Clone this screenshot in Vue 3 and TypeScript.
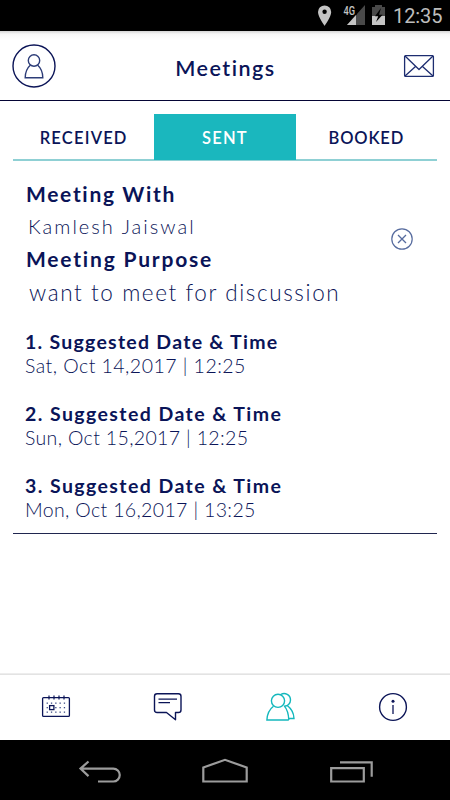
<script setup lang="ts">
import { ref } from 'vue'

interface Slot {
  id: number
  when: string
}

const tabs = ['RECEIVED', 'SENT', 'BOOKED']
const active = ref('SENT')
const slots: Slot[] = [
  { id: 1, when: 'Sat, Oct 14,2017 | 12:25' },
  { id: 2, when: 'Sun, Oct 15,2017 | 12:25' },
  { id: 3, when: 'Mon, Oct 16,2017 | 13:25' },
]
const dots = [0, 1, 2].flatMap((r) =>
  [0, 1, 2, 3, 4].map((c) => ({ x: 6 + c * 4.3, y: 11 + r * 4.5 })),
).filter((d) => !(d.x > 9 && d.x < 12 && d.y > 14 && d.y < 17))
</script>

<template>
  <div class="screen">
    <div class="status">
      <svg width="130" height="31" viewBox="0 0 130 31">
        <path d="M4.600 5.400a6.600 6.600 0 0 0-6.600 6.600c0 4.800 6.600 13.800 6.600 13.800s6.600-9 6.600-13.800a6.600 6.600 0 0 0-6.600-6.600z" fill="#c4c4c4" />
        <circle cx="4.600" cy="11.800" r="2.200" fill="#000" />
        <path d="M45 5v20H27z" fill="#494949" />
        <path d="M36 15v10h-9z" fill="#c4c4c4" />
        <path d="M22 5h14.500v10H22z" fill="#000" />
        <text class="net" x="23.500" y="14.500" textLength="11.500" lengthAdjust="spacingAndGlyphs">4G</text>
        <path d="M55 5h7v2h3v9H52V7h3z" fill="#494949" />
        <path d="M52 16h13v9H52z" fill="#c4c4c4" />
        <path d="M61 8l-6 8.200h3.200L56 22l6.600-7.200H59z" fill="#000" />
        <text class="clock" x="73" y="23.200" textLength="49.500">12:35</text>
      </svg>
    </div>

    <header class="header">
      <svg class="avatar" width="46" height="46" viewBox="0 0 46 46" fill="none">
        <circle cx="23" cy="23" r="21" stroke="#0b1457" stroke-width="1.400" />
        <g stroke="#2d3d78" stroke-width="1.400">
          <circle cx="23" cy="17.500" r="5.700" />
          <path d="M19.500 22c-3.200 2.800-5.200 7.200-5.300 12.700h17.600C31.700 29.200 29.700 24.800 26.500 22" />
        </g>
      </svg>
      <h1>Meetings</h1>
      <svg class="mail" width="32" height="24" viewBox="0 0 32 24" fill="none" stroke="#1d2d70" stroke-width="1.300" stroke-linejoin="round">
        <rect x="1.600" y="1.600" width="28.800" height="20.800" rx="1" />
        <path d="M2 2l14 13.500L30 2M2 22l10.500-9.500M30 22l-10.500-9.500" />
      </svg>
    </header>

    <nav class="tabs">
      <button v-for="t in tabs" :key="t" :class="[t.toLowerCase(), { on: t === active }]" @click="active = t">{{ t }}</button>
    </nav>

    <main class="body">
      <section class="meeting">
        <div class="top">
          <div class="info">
            <h2 class="with">Meeting With</h2>
            <p class="name">Kamlesh Jaiswal</p>
            <h2 class="why">Meeting Purpose</h2>
            <p class="purpose">want to meet for discussion</p>
          </div>
          <svg class="cancel" width="24" height="24" viewBox="0 0 24 24" fill="none" stroke="#566b9e">
            <circle cx="12" cy="12" r="10.200" stroke-width="1.200" />
            <path d="M8 8l8 8M16 8l-8 8" stroke-width="1.300" />
          </svg>
        </div>
        <ol class="slots">
          <li v-for="s in slots" :key="s.id" :class="'s' + s.id">
            <h3>{{ s.id }}. Suggested Date &amp; Time</h3>
            <p>{{ s.when }}</p>
          </li>
        </ol>
      </section>
    </main>

    <nav class="dock">
      <a>
        <svg width="30" height="30" viewBox="0 0 30 30" fill="none" stroke="#0b1457">
          <rect x="1.600" y="5.600" width="26.800" height="18.800" rx="1" stroke-width="1.300" />
          <path d="M8 3.500v4M13 3.500v4M18 3.500v4M23 3.500v4" stroke-width="1.200" />
          <rect v-for="d in dots" :key="d.x + '-' + d.y" :x="d.x - 0.4" :y="d.y - 0.5" width="1.300" height="1.300" fill="#3d4c86" stroke="none" />
          <rect x="8.600" y="13.600" width="4.300" height="4" stroke-width="1.300" fill="#fff" />
        </svg>
      </a>
      <a>
        <svg width="30" height="30" viewBox="0 0 30 30" fill="none" stroke="#0b1457">
          <path d="M4.100 1.800h21.300q2.600 0 2.600 2.600v13.500q0 2.600-2.600 2.600h-2.900v7.200l-9-7.200H4.100q-2.600 0-2.600-2.600V4.400q0-2.600 2.600-2.600z" stroke-width="1.400" stroke-linejoin="round" />
          <path d="M5.500 7.200h18.500M5.500 10.600H17" stroke-width="1.300" />
        </svg>
      </a>
      <a>
        <svg width="30" height="30" viewBox="0 0 30 30" fill="none" stroke="#14b8bd" stroke-width="1.400">
          <path d="M15 2.300c4-2 9.500.3 9.500 5.700 0 3.800-3 6.400-6.300 5.900M21.200 13.500c3.800 2.800 6.600 7.600 6.800 13H22.500M18.200 13.900c2.500 2.800 4.300 7.400 4.600 14.100" />
          <path d="M7.500 14.200C3.700 17 1.200 22 .9 28h21.900" />
          <circle cx="12" cy="8.800" r="6.600" fill="#fff" />
        </svg>
      </a>
      <a>
        <svg width="30" height="30" viewBox="0 0 30 30" fill="none">
          <circle cx="15" cy="15" r="13.400" stroke="#0b1457" stroke-width="1.400" />
          <circle cx="15" cy="9.300" r="1.500" fill="#0b1457" />
          <path d="M15 13v9" stroke="#0b1457" stroke-width="1.300" />
        </svg>
      </a>
    </nav>

    <div class="keys">
      <svg width="450" height="60" viewBox="0 0 450 60" fill="none" stroke="#9c9c9c" stroke-width="2.200">
        <path d="M88.500 21.500L80.500 28.600l8 7.500M80.500 28.600h32.800a6.400 6.400 0 0 1 0 12.900H98" />
        <path d="M203.300 27.500L225 19.800l21.700 7.700v14h-43.400z" />
        <path d="M331.200 28.200h32.600v13.300h-32.600zM340 22.300h31.700v14.500" />
      </svg>
    </div>
  </div>
</template>

<style>
body {
  margin: 0;
  background: #fff;
}
</style>

<style scoped>
* {
  box-sizing: border-box;
}
h1, h2, h3, p, ol {
  margin: 0;
  padding: 0;
  list-style: none;
}
.screen {
  display: flex;
  flex-direction: column;
  width: 450px;
  height: 800px;
  background: #fff;
  color: #0a1458;
  font-family: Lato, "Noto Sans", sans-serif;
  white-space: nowrap;
  overflow: hidden;
}
.status {
  display: flex;
  justify-content: flex-end;
  height: 31px;
  background: #000;
}
.status svg {
  overflow: visible;
}
.net {
  font: 500 12px Roboto, sans-serif;
  fill: #c4c4c4;
}
.clock {
  font: 400 20px Roboto, sans-serif;
  fill: #bdbdbd;
}
.header {
  display: flex;
  align-items: center;
  justify-content: space-between;
  height: 70px;
  padding: 0 15px 0 11px;
  border-bottom: 1px solid #050535;
  background: linear-gradient(#d4d4d4, #f7f7f7 3px, #fff 9px);
}
h1 {
  padding: 4px 0 0;
  margin-left: -9px;
  font-size: 21.5px;
  font-weight: 600;
  letter-spacing: 1.5px;
}
.tabs {
  display: flex;
  height: 47px;
  margin: 13px 13px 0;
  background: linear-gradient(#8fd0d4, #8fd0d4) bottom / 100% 2px no-repeat;
}
.tabs button {
  flex: 1;
  height: 46px;
  padding: 1px 0 0;
  border: 0;
  background: none;
  color: inherit;
  font: 600 16.5px Lato, sans-serif;
  letter-spacing: 1.2px;
}
.tabs .booked {
  letter-spacing: .85px;
}
.tabs .on {
  background: #1ab7be;
  color: #fff;
}
.body {
  flex: 1;
  padding: 0 13px;
}
.meeting {
  height: 373px;
  padding: 19px 12px 0;
  border-bottom: 1px solid #20264f;
}
.top {
  display: flex;
  align-items: center;
  justify-content: space-between;
  padding-right: 11px;
}
.info {
  display: grid;
  grid-template-rows: 32px 33px 33px 28px;
}
h2 {
  line-height: 28px;
  font-size: 21px;
  font-weight: 700;
}
.with {
  padding-left: 1px;
  letter-spacing: 1.68px;
}
.why {
  padding-left: 1px;
  letter-spacing: 1.8px;
}
.name {
  padding-left: 3px;
  line-height: 28px;
  font-size: 20px;
  font-weight: 300;
  letter-spacing: 2.02px;
}
.purpose {
  padding: 1px 0 0 4px;
  line-height: 27px;
  font-size: 22.5px;
  font-weight: 300;
  letter-spacing: 1.6px;
}
.cancel {
  margin-bottom: 9px;
}
.slots {
  display: grid;
  row-gap: 26px;
  padding-top: 25px;
}
h3 {
  line-height: 22px;
  padding-bottom: 1px;
  font-size: 19.5px;
  font-weight: 700;
  letter-spacing: 1.42px;
}
.slots p {
  line-height: 23px;
  font-size: 19.5px;
  font-weight: 300;
  letter-spacing: .35px;
}
.s1 h3 {
  letter-spacing: 1.26px;
}
.s1 p {
  letter-spacing: .47px;
}
.dock {
  display: flex;
  justify-content: space-around;
  align-items: center;
  height: 67px;
  padding: 1px 1px 0 0;
  background: linear-gradient(#f2f2f2, #dedede 2px, #fff 2px);
}
.dock a {
  display: flex;
}
.keys {
  height: 60px;
  background: #000;
}
</style>
